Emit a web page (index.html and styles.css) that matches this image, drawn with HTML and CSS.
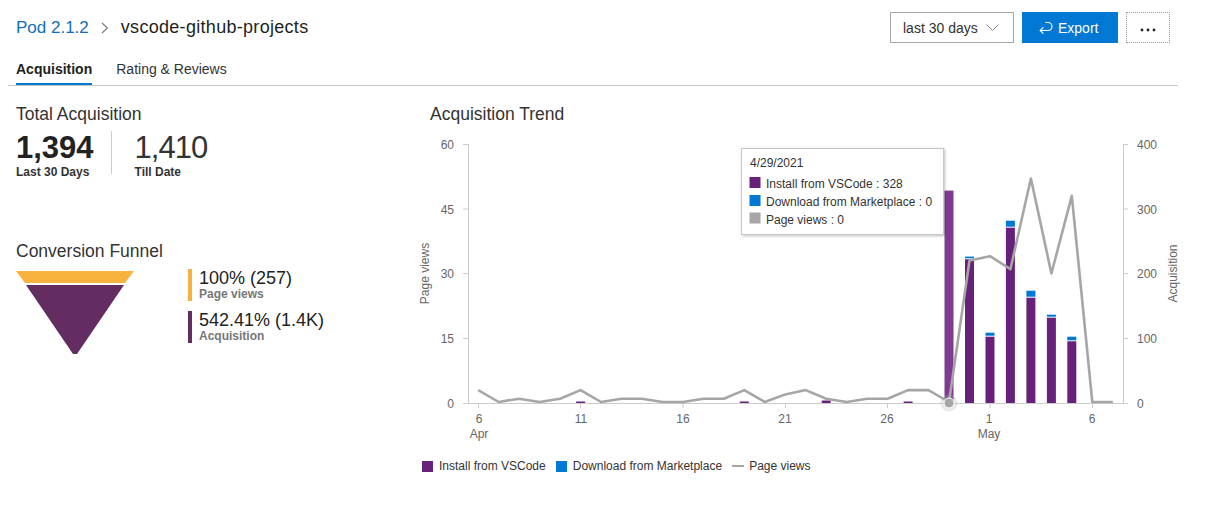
FILE: index.html
```html
<!DOCTYPE html>
<html lang="en">

<head>
    <meta charset="UTF-8">
    <title>vscode-github-projects</title>
    <link rel="stylesheet" href="styles.css">
</head>

<body>
    <header class="topbar">
        <div class="crumbs">
            <a class="crumb-link" href="#">Pod 2.1.2</a>
            <svg class="crumb-sep" width="8" height="12" viewBox="0 0 8 12">
                <path d="M1 1 L6.5 6 L1 11" fill="none" stroke="#777" stroke-width="1.1" />
            </svg>
            <span class="crumb-title">vscode-github-projects</span>
        </div>
        <div class="actions">
            <button class="range">
                <span>last 30 days</span>
                <svg width="13" height="8" viewBox="0 0 13 8">
                    <path d="M0.5 0.5 L6.5 6.5 L12.5 0.5" fill="none" stroke="#888" stroke-width="1" />
                </svg>
            </button>
            <button class="export">
                <svg width="14" height="14" viewBox="0 0 14 14">
                    <path d="M6.5 1.5 H9 A4 4 0 0 1 9 9.5 H1.2 M4.4 6.3 L1.2 9.5 L4.4 12.7" fill="none" stroke="#fff" stroke-width="1.2" />
                </svg>
                <span>Export</span>
            </button>
            <button class="more">
                <svg width="16" height="4" viewBox="0 0 16 4">
                    <circle cx="2" cy="2" r="1.4" fill="#222" />
                    <circle cx="8" cy="2" r="1.4" fill="#222" />
                    <circle cx="14" cy="2" r="1.4" fill="#222" />
                </svg>
            </button>
        </div>
    </header>

    <nav class="tabs">
        <a class="tab active" href="#">Acquisition</a>
        <a class="tab" href="#">Rating &amp; Reviews</a>
    </nav>

    <main class="content">
        <section class="summary">
            <h2>Total Acquisition</h2>
            <div class="stats">
                <div class="stat">
                    <div class="stat-num bold">1,394</div>
                    <div class="stat-label">Last 30 Days</div>
                </div>
                <div class="divider"></div>
                <div class="stat">
                    <div class="stat-num light">1,410</div>
                    <div class="stat-label">Till Date</div>
                </div>
            </div>

            <h2 class="funnel-title">Conversion Funnel</h2>
            <div class="funnel">
                <svg class="funnel-shape" width="120" height="90" viewBox="0 0 120 90">
                    <polygon points="0,2 118,2 109,14 9,14" fill="#f7b23d" />
                    <polygon points="10,16 108,16 61,85 57,85" fill="#632d61" />
                </svg>
                <div class="funnel-legend">
                    <div class="funnel-item views">
                        <div class="funnel-value">100% (257)</div>
                        <div class="funnel-name">Page views</div>
                    </div>
                    <div class="funnel-item acq">
                        <div class="funnel-value">542.41% (1.4K)</div>
                        <div class="funnel-name">Acquisition</div>
                    </div>
                </div>
            </div>
        </section>

        <section class="trend">
            <h2>Acquisition Trend</h2>
            <svg class="chart" width="790" height="315" viewBox="410 130 790 315">
                <defs>
                    <filter id="shadow" x="-10%" y="-10%" width="130%" height="140%">
                        <feDropShadow dx="1" dy="1" stdDeviation="1.5" flood-color="#000" flood-opacity="0.25" />
                    </filter>
                </defs>

                <!-- axes -->
                <g stroke="#ccc" stroke-width="1">
                    <line x1="468.5" y1="144" x2="468.5" y2="403" />
                    <line x1="1123.5" y1="144" x2="1123.5" y2="403" />
                    <line x1="463" y1="403.5" x2="1128" y2="403.5" />
                    <line x1="463" y1="144.5" x2="468" y2="144.5" />
                    <line x1="463" y1="209" x2="468" y2="209" />
                    <line x1="463" y1="273.5" x2="468" y2="273.5" />
                    <line x1="463" y1="338.5" x2="468" y2="338.5" />
                    <line x1="1124" y1="144.5" x2="1128" y2="144.5" />
                    <line x1="1124" y1="209" x2="1128" y2="209" />
                    <line x1="1124" y1="273.5" x2="1128" y2="273.5" />
                    <line x1="1124" y1="338.5" x2="1128" y2="338.5" />
                    <line x1="478.5" y1="403" x2="478.5" y2="408" />
                    <line x1="580.5" y1="403" x2="580.5" y2="408" />
                    <line x1="683" y1="403" x2="683" y2="408" />
                    <line x1="785.5" y1="403" x2="785.5" y2="408" />
                    <line x1="887.5" y1="403" x2="887.5" y2="408" />
                    <line x1="990" y1="403" x2="990" y2="408" />
                    <line x1="1092.5" y1="403" x2="1092.5" y2="408" />
                </g>

                <g class="axis-text" text-anchor="end">
                    <text x="454" y="149">60</text>
                    <text x="454" y="213.5">45</text>
                    <text x="454" y="278">30</text>
                    <text x="454" y="343">15</text>
                    <text x="454" y="407.5">0</text>
                </g>
                <g class="axis-text">
                    <text x="1137" y="149">400</text>
                    <text x="1137" y="213.5">300</text>
                    <text x="1137" y="278">200</text>
                    <text x="1137" y="343">100</text>
                    <text x="1137" y="407.5">0</text>
                </g>
                <g class="axis-text" text-anchor="middle">
                    <text x="479" y="422.5">6</text>
                    <text x="479" y="438">Apr</text>
                    <text x="581" y="422.5">11</text>
                    <text x="683" y="422.5">16</text>
                    <text x="785" y="422.5">21</text>
                    <text x="887" y="422.5">26</text>
                    <text x="989" y="422.5">1</text>
                    <text x="989" y="438">May</text>
                    <text x="1092" y="422.5">6</text>
                </g>
                <text class="axis-text" transform="translate(429 273.5) rotate(-90)" text-anchor="middle">Page views</text>
                <text class="axis-text" transform="translate(1177 273.5) rotate(-90)" text-anchor="middle">Acquisition</text>

                <!-- install from vscode -->
                <g fill="#68217a">
                    <rect x="576.1" y="401.5" width="9" height="1.5" />
                    <rect x="739.8" y="401.5" width="9" height="1.5" />
                    <rect x="821.7" y="400.5" width="9" height="2.5" />
                    <rect x="903.6" y="401.5" width="9" height="1.5" />
                    <rect x="965" y="259.3" width="9" height="143.7" />
                    <rect x="985.5" y="336.7" width="9" height="66.3" />
                    <rect x="1005.9" y="227.7" width="9" height="175.3" />
                    <rect x="1026.4" y="297.7" width="9" height="105.3" />
                    <rect x="1046.9" y="317.7" width="9" height="85.3" />
                    <rect x="1067.3" y="341.3" width="9" height="61.7" />
                </g>
                <rect x="944.5" y="190.6" width="9" height="212.4" fill="#7f3b91" />

                <!-- download from marketplace -->
                <g fill="#0078d4">
                    <rect x="965" y="256.6" width="9" height="1.7" />
                    <rect x="985.5" y="332.7" width="9" height="3" />
                    <rect x="1005.9" y="220.7" width="9" height="6" />
                    <rect x="1026.4" y="290.7" width="9" height="6" />
                    <rect x="1046.9" y="314.7" width="9" height="2" />
                    <rect x="1067.3" y="336.7" width="9" height="3.6" />
                </g>

                <!-- page views -->
                <polyline fill="none" stroke="#a6a6a6" stroke-width="2.6" stroke-linejoin="round"
                    points="478.2,390.1 498.7,402 519.1,398.7 539.6,402 560.1,398.7 580.6,390.1 601,402 621.5,398.7 642,398.7 662.4,402 682.9,402 703.4,398.7 723.8,398.7 744.3,390.1 764.8,402 785.3,394.4 805.7,390.1 826.2,398.7 846.7,402 867.1,398.7 887.6,398.7 908.1,390.1 928.5,390.1 949,402 969.5,260.6 990,256.2 1010.4,269.2 1030.9,178.5 1051.4,273.5 1071.8,195.8 1092.3,402 1112.8,402" />
                <circle cx="949" cy="403" r="8.5" fill="#a6a6a6" opacity="0.25" />
                <circle cx="949" cy="403" r="5" fill="#a6a6a6" stroke="#fff" stroke-width="1" />

                <!-- tooltip -->
                <g class="tip">
                    <rect x="741.5" y="148.5" width="202" height="86" fill="#fff" stroke="#c8c8c8" filter="url(#shadow)" />
                    <text x="750" y="167">4/29/2021</text>
                    <rect x="749.5" y="177" width="11" height="11" fill="#68217a" />
                    <text x="766" y="188">Install from VSCode : 328</text>
                    <rect x="749.5" y="195" width="11" height="11" fill="#0078d4" />
                    <text x="766" y="206">Download from Marketplace : 0</text>
                    <rect x="749.5" y="212.5" width="11" height="11" fill="#a6a6a6" />
                    <text x="766" y="223.5">Page views : 0</text>
                </g>
            </svg>

            <div class="legend">
                <span class="legend-item"><i class="swatch install"></i>Install from VSCode</span>
                <span class="legend-item"><i class="swatch download"></i>Download from Marketplace</span>
                <span class="legend-item"><i class="swatch-line"></i>Page views</span>
            </div>
        </section>
    </main>
</body>

</html>
```

FILE: styles.css
```css
body {
    margin: 0;
    background-color: #fff;
    color: #222;
    font-family: "Liberation Sans", Arial, sans-serif;
}

button {
    font-family: inherit;
    cursor: pointer;
}

h2 {
    margin: 17px 0 0;
    font-size: 17.5px;
    line-height: 22px;
    font-weight: normal;
    color: #333;
}

.topbar {
    display: flex;
    justify-content: space-between;
    align-items: center;
    width: 1154px;
    margin-left: 8px;
    padding: 12px 8px 0;
    height: 31px;
}

.crumbs {
    display: flex;
    align-items: center;
    font-size: 18px;
}

.crumb-link {
    font-size: 17px;
    color: #106ebe;
    text-decoration: none;
}

.crumb-sep {
    margin: 0 12px 0 12px;
}

.crumb-title {
    color: #201f1e;
    letter-spacing: 0.3px;
}

.actions {
    display: flex;
    gap: 8px;
    height: 31px;
}

.range {
    display: flex;
    align-items: center;
    width: 124px;
    padding: 0 0 0 12px;
    background-color: #fff;
    border: 1px solid #a6a6a6;
    color: #333;
    font-size: 14px;
}

.range svg {
    margin-left: 8px;
}

.export {
    display: flex;
    align-items: center;
    width: 96px;
    padding: 0 0 0 17px;
    background-color: #0078d4;
    border: none;
    color: #fff;
    font-size: 14px;
}

.export svg {
    margin-right: 5px;
}

.more {
    width: 44px;
    padding: 0;
    background-color: #fff;
    border: 1px dotted #999;
}

.tabs {
    display: flex;
    gap: 24px;
    width: 1154px;
    height: 42px;
    margin-left: 8px;
    padding: 0 8px;
    border-bottom: 1px solid #c8c8c8;
}

.tab {
    padding: 16px 0 5px;
    line-height: 20px;
    font-size: 14px;
    color: #333;
    text-decoration: none;
    border-bottom: 2px solid transparent;
}

.tab.active {
    color: #222;
    font-weight: bold;
    border-bottom-color: #0078d4;
}

.content {
    display: flex;
    padding-left: 16px;
}

.summary {
    width: 394px;
}

.stats {
    display: flex;
}

.stat {
    margin-top: 6px;
}

.stat-num {
    font-size: 31px;
    line-height: 34px;
    color: #333;
}

.stat-num.bold {
    font-weight: bold;
    color: #222;
}

.stat-num.light {
    letter-spacing: -1px;
}

.stat-label {
    font-size: 12px;
    line-height: 14px;
    font-weight: bold;
    color: #333;
}

.divider {
    width: 1px;
    height: 43px;
    margin: 6px 23px 0 17px;
    background-color: #ccc;
}

.funnel-title {
    margin-top: 61px;
}

.funnel {
    display: flex;
    margin-top: 7px;
}

.funnel-shape {
    margin-right: 52px;
}

.funnel-item {
    padding-left: 7px;
    border-left: 4px solid #f7b23d;
    margin-bottom: 10px;
}

.funnel-item.acq {
    border-left-color: #632d61;
}

.funnel-value {
    font-size: 18px;
    line-height: 18px;
    color: #222;
}

.funnel-name {
    font-size: 12px;
    line-height: 14px;
    font-weight: bold;
    color: #777;
}

.trend h2 {
    padding-left: 20px;
}

.chart {
    display: block;
    margin-top: 5px;
}

.axis-text {
    font-family: "Liberation Sans", Arial, sans-serif;
    font-size: 12px;
    fill: #666;
}

.tip text {
    font-family: "Liberation Sans", Arial, sans-serif;
    font-size: 12px;
    fill: #333;
}

.legend {
    display: flex;
    margin-top: 14px;
    padding-left: 12px;
    font-size: 12px;
    line-height: 14px;
    color: #333;
}

.legend-item {
    display: flex;
    align-items: center;
    margin-right: 10px;
}

.swatch {
    width: 11px;
    height: 11px;
    margin-right: 6px;
}

.swatch.install {
    background-color: #68217a;
}

.swatch.download {
    background-color: #0078d4;
}

.swatch-line {
    width: 12px;
    height: 2px;
    margin-right: 5px;
    background-color: #a6a6a6;
}
```
